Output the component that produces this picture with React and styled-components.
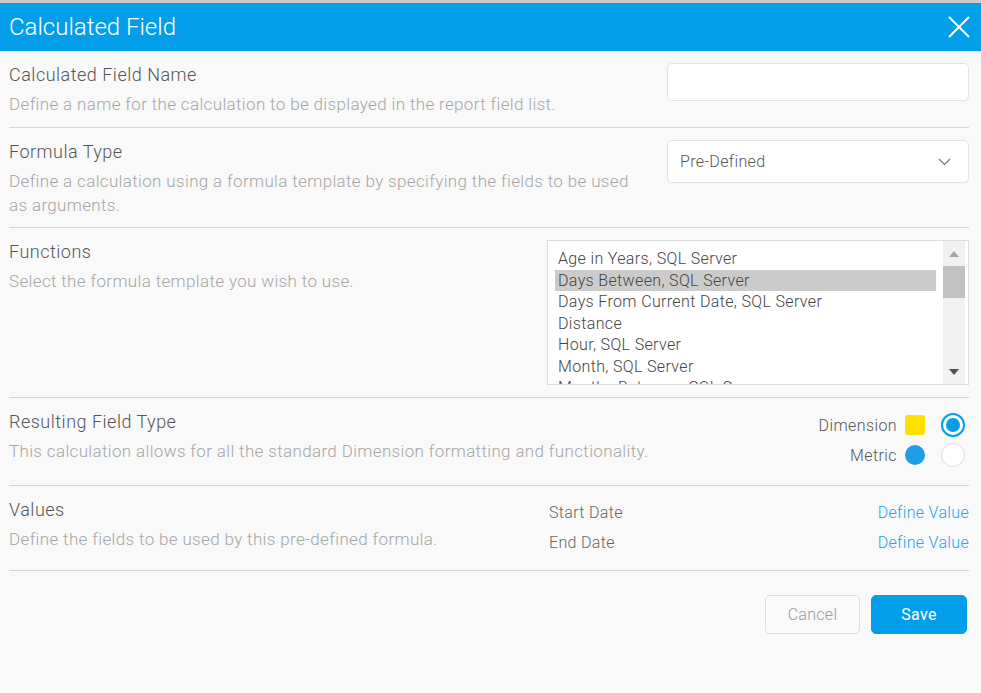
import React from "react";
import styled, { createGlobalStyle } from "styled-components";

const GlobalStyle = createGlobalStyle`
	html, body {
		margin: 0;
		padding: 0;
		background: #f9f9f9;
		font-family: Roboto, "Noto Sans", sans-serif;
	}
`;

const Page = styled.div`
	width: 981px;
	height: 693px;
	overflow: hidden;
	background: #f9f9f9;
`;

// part of the page behind the dialog shows through at the very top
const BehindStrip = styled.div`
	height: 3px;
	background: #c9c9c9;
`;

const Header = styled.div`
	height: 48px;
	background: #039ee9;
	display: flex;
	align-items: center;
	justify-content: space-between;
	padding: 0 10px 0 9px;
`;

const Title = styled.h1`
	margin: 0;
	font-size: 24px;
	font-weight: 300;
	color: #fff;
	letter-spacing: 0;
`;

const CloseButton = styled.button`
	border: 0;
	background: none;
	padding: 0;
	width: 24px;
	height: 24px;
	display: flex;
	align-items: center;
	justify-content: center;
	cursor: pointer;
`;

const Body = styled.div`
	padding: 0 12px 0 9px;
`;

const Section = styled.div`
	display: flex;
	justify-content: space-between;
	align-items: flex-start;
	padding: 12px 0 ${(p) => p.$bottom || 12}px;
	border-bottom: 1px solid #d3d3d3;
`;

const Info = styled.div`
	max-width: ${(p) => p.$max || 640}px;
`;

const Label = styled.div`
	font-size: 18px;
	font-weight: 300;
	line-height: 24px;
	letter-spacing: 0.5px;
	color: #555;
`;

const Desc = styled.div`
	margin-top: 5px;
	font-size: 17px;
	font-weight: 300;
	line-height: 24px;
	letter-spacing: 0.35px;
	color: #a6a6a6;
`;

const TextInput = styled.input`
	box-sizing: border-box;
	width: 302px;
	height: 38px;
	border: 1px solid #e2e2e2;
	border-radius: 5px;
	background: #fff;
	outline: none;
`;

const SelectBox = styled.div`
	box-sizing: border-box;
	width: 302px;
	height: 43px;
	border: 1px solid #e2e2e2;
	border-radius: 5px;
	background: #fff;
	display: flex;
	align-items: center;
	justify-content: space-between;
	padding: 0 17px 0 12px;
	font-size: 16px;
	font-weight: 300;
	letter-spacing: 0.35px;
	color: #555;
`;

const ListBox = styled.div`
	box-sizing: border-box;
	width: 422px;
	height: 145px;
	border: 1px solid #dcdcdc;
	background: #fff;
	display: flex;
	padding: 0 3px 0 7px;
`;

const ListItems = styled.div`
	flex: 1;
	overflow: hidden;
	padding-top: 7px;
	margin-right: 7px;
`;

const ListItem = styled.div`
	height: 21.5px;
	line-height: 21.5px;
	padding-left: 3px;
	font-size: 16px;
	font-weight: 300;
	letter-spacing: 0.35px;
	color: #444;
	white-space: nowrap;
	background: ${(p) => (p.$selected ? "#cbcbcb" : "transparent")};
`;

const ScrollTrack = styled.div`
	width: 22px;
	background: #f1f1f1;
	display: flex;
	flex-direction: column;
	align-items: center;
`;

const ScrollArrow = styled.div`
	height: 25px;
	width: 100%;
	display: flex;
	align-items: center;
	justify-content: center;
`;

const ScrollThumb = styled.div`
	width: 100%;
	height: 32px;
	background: #c1c1c1;
`;

const ScrollSpacer = styled.div`
	flex: 1;
`;

const TypeChoices = styled.div`
	display: flex;
	flex-direction: column;
	gap: 6px;
	margin: 3px 4px 0 0;
`;

const TypeRow = styled.label`
	display: flex;
	align-items: center;
	justify-content: flex-end;
	height: 24px;
	font-size: 16px;
	font-weight: 300;
	letter-spacing: 0.4px;
	color: #555;
`;

const TypeName = styled.span`
	margin-right: 8px;
`;

const Swatch = styled.span`
	width: 20px;
	height: 20px;
	border-radius: ${(p) => (p.$round ? "50%" : "3px")};
	background: ${(p) => p.$color};
	margin-right: 16px;
`;

const Radio = styled.span`
	box-sizing: border-box;
	width: 24px;
	height: 24px;
	border-radius: 50%;
	background: #fff;
	border: ${(p) => (p.$checked ? "2px solid #039ee9" : "1px solid #dedede")};
	display: flex;
	align-items: center;
	justify-content: center;
	&::after {
		content: "";
		width: 14px;
		height: 14px;
		border-radius: 50%;
		background: ${(p) => (p.$checked ? "#039ee9" : "transparent")};
	}
`;

const ValueList = styled.div`
	width: 420px;
	display: flex;
	flex-direction: column;
	gap: 6px;
	margin-top: 3px;
`;

const ValueRow = styled.div`
	display: flex;
	justify-content: space-between;
	height: 24px;
	line-height: 24px;
	font-size: 16px;
	font-weight: 300;
	letter-spacing: 0.33px;
`;

const ValueName = styled.span`
	color: #666;
`;

const DefineLink = styled.a`
	color: #1ba4f0;
	text-decoration: none;
	cursor: pointer;
`;

const Footer = styled.div`
	display: flex;
	justify-content: flex-end;
	gap: 11px;
	padding: 24px 2px 0 0;
`;

const Button = styled.button`
	box-sizing: border-box;
	width: ${(p) => (p.$primary ? 96 : 95)}px;
	height: 39px;
	border-radius: 5px;
	font-family: Roboto, "Noto Sans", sans-serif;
	font-size: 16px;
	font-weight: ${(p) => (p.$primary ? 400 : 300)};
	letter-spacing: 0.3px;
	border: 1px solid ${(p) => (p.$primary ? "#039ee9" : "#dddddd")};
	background: ${(p) => (p.$primary ? "#039ee9" : "#fafafa")};
	color: ${(p) => (p.$primary ? "#fff" : "#999")};
	cursor: pointer;
`;

const functions = [
	"Age in Years, SQL Server",
	"Days Between, SQL Server",
	"Days From Current Date, SQL Server",
	"Distance",
	"Hour, SQL Server",
	"Month, SQL Server",
	"Months Between, SQL Server",
];

const App = () => {
	return (
		<Page>
			<GlobalStyle />
			<BehindStrip />
			<Header>
				<Title>Calculated Field</Title>
				<CloseButton aria-label="Close">
					<svg width="22" height="22" viewBox="0 0 22 22">
						<path d="M1 1 L21 21 M21 1 L1 21" stroke="#fff" strokeWidth="2" />
					</svg>
				</CloseButton>
			</Header>

			<Body>
				<Section $bottom={11}>
					<Info>
						<Label>Calculated Field Name</Label>
						<Desc>Define a name for the calculation to be displayed in the report field list.</Desc>
					</Info>
					<TextInput />
				</Section>

				<Section $bottom={10}>
					<Info $max={640}>
						<Label>Formula Type</Label>
						<Desc>
							Define a calculation using a formula template by specifying the fields to be used
							as arguments.
						</Desc>
					</Info>
					<SelectBox>
						Pre-Defined
						<svg width="13" height="8" viewBox="0 0 13 8">
							<path d="M1 1 L6.5 6.5 L12 1" stroke="#777" strokeWidth="1.2" fill="none" />
						</svg>
					</SelectBox>
				</Section>

				<Section>
					<Info>
						<Label>Functions</Label>
						<Desc>Select the formula template you wish to use.</Desc>
					</Info>
					<ListBox>
						<ListItems>
							{functions.map((f, i) => (
								<ListItem key={f} $selected={i === 1}>
									{f}
								</ListItem>
							))}
						</ListItems>
						<ScrollTrack>
							<ScrollArrow>
								<svg width="10" height="6" viewBox="0 0 10 6">
									<path d="M0 6 L5 0 L10 6 Z" fill="#a3a3a3" />
								</svg>
							</ScrollArrow>
							<ScrollThumb />
							<ScrollSpacer />
							<ScrollArrow>
								<svg width="10" height="6" viewBox="0 0 10 6">
									<path d="M0 0 L10 0 L5 6 Z" fill="#505050" />
								</svg>
							</ScrollArrow>
						</ScrollTrack>
					</ListBox>
				</Section>

				<Section $bottom={18}>
					<Info $max={700}>
						<Label>Resulting Field Type</Label>
						<Desc>This calculation allows for all the standard Dimension formatting and functionality.</Desc>
					</Info>
					<TypeChoices>
						<TypeRow>
							<TypeName>Dimension</TypeName>
							<Swatch $color="#ffe000" />
							<Radio $checked />
						</TypeRow>
						<TypeRow>
							<TypeName>Metric</TypeName>
							<Swatch $color="#1c9fe8" $round />
							<Radio />
						</TypeRow>
					</TypeChoices>
				</Section>

				<Section $bottom={15}>
					<Info>
						<Label>Values</Label>
						<Desc>Define the fields to be used by this pre-defined formula.</Desc>
					</Info>
					<ValueList>
						<ValueRow>
							<ValueName>Start Date</ValueName>
							<DefineLink>Define Value</DefineLink>
						</ValueRow>
						<ValueRow>
							<ValueName>End Date</ValueName>
							<DefineLink>Define Value</DefineLink>
						</ValueRow>
					</ValueList>
				</Section>

				<Footer>
					<Button>Cancel</Button>
					<Button $primary>Save</Button>
				</Footer>
			</Body>
		</Page>
	);
};

export default App;
